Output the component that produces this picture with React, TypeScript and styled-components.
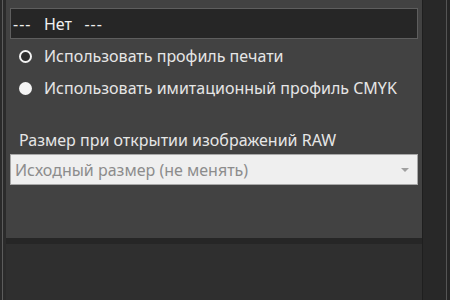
import React from "react";
import styled, { createGlobalStyle } from "styled-components";

const Global = createGlobalStyle`
  html, body { margin: 0; padding: 0; background: #2a2a2a; }
  body { font-family: "Noto Sans", "Open Sans", sans-serif; }
`;

const Screen = styled.div`
  display: flex;
  width: 450px;
  height: 300px;
  overflow: hidden;
  background: #2a2a2a;
`;

const LeftRail = styled.div`
  width: 6px;
  flex: none;
  background: linear-gradient(to right, #2a2a2a 0 2px, #5c5c5c 2px 3px, #2b2b2b 3px);
`;

const MainColumn = styled.div`
  width: 416px;
  flex: none;
  display: flex;
  flex-direction: column;
`;

const Panel = styled.div`
  height: 238px;
  background: #424242;
  box-sizing: border-box;
  padding: 8px 4px 0 4px;
  display: flex;
  flex-direction: column;
`;

const Divider = styled.div`
  height: 6px;
  background: #262626;
  flex: none;
`;

const Lower = styled.div`
  flex: 1;
  background: #2f2f2f;
`;

const RightRail = styled.div`
  flex: 1;
  background: linear-gradient(to right, #1f1f1f 0 1px, #282828 1px 24px, #555555 24px 25px, #262626 25px);
`;

const ValueBox = styled.div`
  height: 31px;
  box-sizing: border-box;
  border: 1px solid #5e5e5e;
  background: #262626;
  color: #f0f0f0;
  font-size: 16px;
  display: flex;
  align-items: center;
  padding-left: 2px;
  white-space: pre;
`;

const Dashes = styled.span`
  letter-spacing: 1px;
`;

const RadioList = styled.div`
  display: flex;
  flex-direction: column;
  margin-top: 1px;
`;

const RadioRow = styled.div`
  height: 32px;
  display: flex;
  align-items: center;
  padding-left: 9px;
  gap: 12px;
  color: #e6e6e6;
  font-size: 16px;
`;

const RadioDot = styled.span<{ $checked?: boolean }>`
  width: 13px;
  height: 13px;
  box-sizing: border-box;
  border-radius: 50%;
  flex: none;
  border: ${(p) => (p.$checked ? "2.5px solid #f2f2f2" : "none")};
  background: ${(p) => (p.$checked ? "#2c2c2c" : "#f4f4f4")};
`;

const SectionLabel = styled.div`
  margin-top: 26px;
  padding-left: 9px;
  color: #e6e6e6;
  font-size: 16px;
  line-height: 20px;
`;

const Select = styled.div`
  margin-top: 4px;
  height: 31px;
  box-sizing: border-box;
  border: 1px solid #a8a8a8;
  background: #efefef;
  color: #8c8c8c;
  font-size: 16px;
  display: flex;
  align-items: center;
  justify-content: space-between;
  padding: 0 8px 0 4px;
`;

const Caret = styled.span`
  width: 0;
  height: 0;
  border-left: 4px solid transparent;
  border-right: 4px solid transparent;
  border-top: 4px solid #a0a0a0;
`;

export default function App() {
  return (
    <>
      <Global />
      <Screen>
        <LeftRail />
        <MainColumn>
          <Panel>
            <ValueBox>
              <Dashes>---</Dashes>
              {"   Нет   "}
              <Dashes>---</Dashes>
            </ValueBox>
            <RadioList>
              <RadioRow>
                <RadioDot $checked />
                Использовать профиль печати
              </RadioRow>
              <RadioRow>
                <RadioDot />
                Использовать имитационный профиль CMYK
              </RadioRow>
            </RadioList>
            <SectionLabel>Размер при открытии изображений RAW</SectionLabel>
            <Select>
              Исходный размер (не менять)
              <Caret />
            </Select>
          </Panel>
          <Divider />
          <Lower />
        </MainColumn>
        <RightRail />
      </Screen>
    </>
  );
}
